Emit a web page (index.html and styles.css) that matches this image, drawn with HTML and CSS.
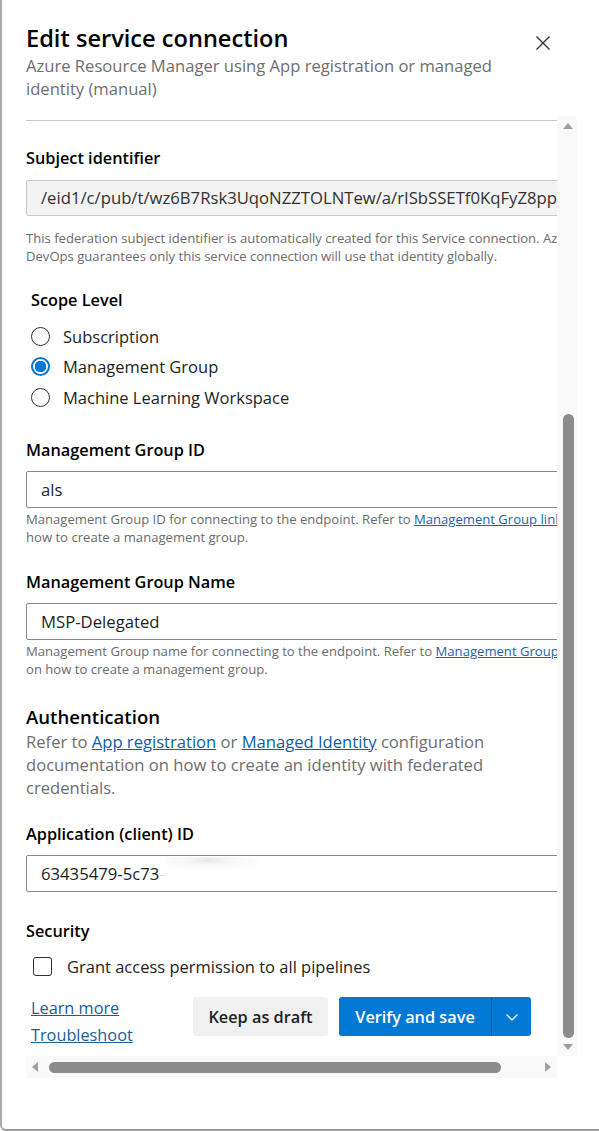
FILE: index.html
```html
<!DOCTYPE html>
<html lang="en">
<head>
<meta charset="utf-8">
<title>Edit service connection</title>
<link rel="stylesheet" href="styles.css">
</head>
<body>
<div class="panel">
  <header class="head">
    <div class="titles">
      <h1 class="title">Edit service connection</h1>
      <p class="sub">Azure Resource Manager using App registration or managed identity (manual)</p>
    </div>
    <button class="close" aria-label="Close">
      <svg width="16" height="16" viewBox="0 0 16 16"><path d="M1.5 1.5 L14.5 14.5 M14.5 1.5 L1.5 14.5" stroke="#323130" stroke-width="1.3" fill="none"/></svg>
    </button>
  </header>

  <div class="scroller">
    <div class="viewport">
      <div class="content">
        <div class="prev-input"></div>

        <div class="label first">Subject identifier</div>
        <div class="input disabled">/eid1/c/pub/t/wz6B7Rsk3UqoNZZTOLNTew/a/rISbSSETf0KqFyZ8ppFQ5bvQ/sc/7ad0</div>
        <div class="hint hint-a">
          <span class="ln">This federation subject identifier is automatically created for this Service connection. Azure</span>
          <span class="ln">DevOps guarantees only this service connection will use that identity globally.</span>
        </div>

        <div class="label scope">Scope Level</div>
        <div class="radios">
          <div class="radio-row"><span class="radio"></span><span class="rlabel">Subscription</span></div>
          <div class="radio-row"><span class="radio on"></span><span class="rlabel">Management Group</span></div>
          <div class="radio-row"><span class="radio"></span><span class="rlabel">Machine Learning Workspace</span></div>
        </div>

        <div class="label sec">Management Group ID</div>
        <div class="input">als</div>
        <div class="hint">
          <span class="ln">Management Group ID for connecting to the endpoint. Refer to <a href="#">Management Group link</a> on</span>
          <span class="ln">how to create a management group.</span>
        </div>

        <div class="label sec2">Management Group Name</div>
        <div class="input">MSP-Delegated</div>
        <div class="hint">
          <span class="ln">Management Group name for connecting to the endpoint. Refer to <a href="#">Management Group link</a></span>
          <span class="ln">on how to create a management group.</span>
        </div>

        <h2 class="auth">Authentication</h2>
        <p class="auth-text">
          <span class="ln">Refer to <a href="#">App registration</a> or <a href="#">Managed Identity</a> configuration</span>
          <span class="ln">documentation on how to create an identity with federated</span>
          <span class="ln">credentials.</span>
        </p>

        <div class="label app">Application (client) ID</div>
        <div class="input appid">63435479-5c73<span class="smudge">-</span><span class="blur"></span></div>

        <div class="label security">Security</div>
        <label class="check-row"><span class="checkbox"></span><span class="clabel">Grant access permission to all pipelines</span></label>

        <div class="footer">
          <div class="links">
            <a href="#">Learn more</a>
            <a href="#">Troubleshoot</a>
          </div>
          <div class="actions">
            <button class="btn draft">Keep as draft</button>
            <div class="split">
              <button class="btn primary">Verify and save</button>
              <button class="btn chevron" aria-label="More">
                <svg width="14" height="14" viewBox="0 0 14 14"><path d="M1.5 4.5 L7 10 L12.5 4.5" stroke="#fff" stroke-width="1.3" fill="none"/></svg>
              </button>
            </div>
          </div>
        </div>
      </div>
    </div>

    <div class="vbar">
      <span class="arrow up"></span>
      <div class="vtrack"><span class="vthumb"></span></div>
      <span class="arrow down"></span>
    </div>
    <div class="hbar">
      <span class="arrow left"></span>
      <div class="htrack"><span class="hthumb"></span></div>
      <span class="arrow right"></span>
    </div>
    <div class="corner"></div>
  </div>
</div>
</body>
</html>
```

FILE: styles.css
```css
* { box-sizing: border-box; }
html, body { margin: 0; padding: 0; background: #ffffff; }
body {
  font-family: "Open Sans", "Noto Sans", "Liberation Sans", sans-serif;
  color: #201f1e;
}

.panel {
  width: 599px;
  height: 1131px;
  border-left: 2px solid #ababab;
  border-bottom: 2px solid #9a9a9a;
  border-bottom-left-radius: 6px;
  background: #fff;
  overflow: hidden;
}

/* header */
.head {
  display: flex;
  justify-content: space-between;
  align-items: flex-start;
  padding: 22px 0 0 24px;
  height: 116px;
}
.titles { width: 492px; }
.title {
  margin: 0;
  font-size: 23.6px;
  font-weight: 600;
  line-height: 32px;
  color: #000;
}
.sub {
  margin: 0;
  font-size: 16.6px;
  line-height: 23px;
  color: #6e6e6e;
  font-weight: 400;
}
.close {
  border: 0;
  background: transparent;
  padding: 0;
  margin: 13px 48px 0 0;
  width: 16px;
  height: 16px;
  display: flex;
}

/* scroll area */
.scroller {
  margin-left: 24px;
  display: grid;
  grid-template-columns: 531px 20px;
  grid-template-rows: 940px 22px;
}
.viewport {
  overflow: hidden;
  position: relative;
}
.content {
  width: 760px;
}
.prev-input {
  height: 5px;
  width: 531px;
  border-bottom: 1px solid #c8c6c4;
}

.label {
  font-size: 16.3px;
  font-weight: 600;
  line-height: 22px;
  color: #000;
}
.label.first { margin-top: 26px; }
.label.scope { margin-top: 24px; padding-left: 5px; }
.label.sec { margin-top: 26px; }
.label.sec2 { margin-top: 25px; }
.label.app { margin-top: 24px; }
.label.security { margin-top: 28px; }

.input {
  margin-top: 10px;
  height: 37px;
  width: 740px;
  border: 1px solid #8a8886;
  border-radius: 2px;
  padding: 0 14px;
  font-size: 16.7px;
  line-height: 35px;
  color: #201f1e;
  white-space: nowrap;
  overflow: hidden;
  position: relative;
  background: #fff;
}
.input.disabled {
  margin-top: 11px;
  height: 36px;
  line-height: 34px;
  background: #f3f3f3;
  border-color: #c8c8c8;
  color: #323130;
}
.appid .smudge { color: #d8d8d8; }
.appid .blur {
  position: absolute;
  left: 138px;
  top: 1px;
  width: 215px;
  height: 33px;
  background: radial-gradient(ellipse at 20% 10%, #e4e4e4 0, #f6f6f6 8%, #ffffff 25%);
}

.hint {
  margin-top: 2px;
  font-size: 13.1px;
  line-height: 18px;
  color: #6b6b6b;
}
.hint.hint-a { margin-top: 13px; }
.ln { display: block; white-space: nowrap; }
a { color: #1a5d9a; text-decoration: underline; }
.hint a { color: #1c63a8; }

/* radios */
.radios {
  margin-top: 10px;
  padding-left: 5px;
  display: flex;
  flex-direction: column;
}
.radio-row {
  height: 30.5px;
  display: flex;
  align-items: center;
  gap: 13px;
}
.radio {
  width: 19px;
  height: 19px;
  border-radius: 50%;
  border: 1px solid #323130;
  background: #fff;
  flex: none;
}
.radio.on {
  border: 2px solid #0078d4;
  background: radial-gradient(circle, #0078d4 0, #0078d4 5.5px, #fff 6px);
}
.rlabel {
  font-size: 16.5px;
  color: #201f1e;
}

/* auth */
.auth {
  margin: 27px 0 0;
  font-size: 18.6px;
  font-weight: 600;
  line-height: 24px;
  color: #000;
}
.auth-text {
  margin: 1px 0 0;
  font-size: 16.6px;
  line-height: 23px;
  color: #6e6e6e;
}
.auth-text a { color: #0f5ea8; }

/* checkbox */
.check-row {
  margin-top: 10px;
  height: 30px;
  display: flex;
  align-items: center;
  padding-left: 7px;
  gap: 15px;
}
.checkbox {
  width: 19px;
  height: 19px;
  border: 1px solid #323130;
  border-radius: 3px;
  flex: none;
}
.clabel { font-size: 16.5px; color: #201f1e; }

/* footer */
.footer {
  width: 531px;
  margin-top: 13px;
  display: flex;
  align-items: flex-start;
  padding: 0 26px 0 5px;
}
.links {
  display: flex;
  flex-direction: column;
  font-size: 16.3px;
  line-height: 27px;
}
.links a { color: #1a5d9a; }
.actions {
  margin-left: auto;
  margin-top: 2.5px;
  display: flex;
  gap: 11px;
}
.btn {
  border: 0;
  height: 39px;
  border-radius: 3px;
  font-family: inherit;
  font-size: 16.3px;
  font-weight: 600;
  padding: 0;
  cursor: pointer;
}
.draft {
  width: 135px;
  background: #f0f0f0;
  color: #201f1e;
}
.split { display: flex; }
.primary {
  width: 152px;
  background: #0078d4;
  color: #fff;
  border-radius: 3px 0 0 3px;
}
.chevron {
  width: 40px;
  background: #0078d4;
  border-left: 1px solid #005a9e;
  border-radius: 0 3px 3px 0;
  display: flex;
  align-items: center;
  justify-content: center;
}

/* scrollbars */
.vbar {
  background: #f9f9f9;
  display: flex;
  flex-direction: column;
  align-items: center;
  padding: 7px 0 6px 2px;
}
.vtrack {
  flex: 1;
  width: 12px;
  display: flex;
  flex-direction: column;
  justify-content: flex-end;
  padding: 0 0 6px;
}
.vthumb {
  display: block;
  height: 624px;
  width: 11px;
  margin: 0 auto;
  border-radius: 6px;
  background: #8c8c8c;
}
.hbar {
  background: #f9f9f9;
  display: flex;
  align-items: center;
  padding: 0 6px 0 6px;
}
.htrack {
  flex: 1;
  padding: 0 5px 0 11px;
}
.hthumb {
  display: block;
  height: 11px;
  width: 452px;
  border-radius: 6px;
  background: #8c8c8c;
}
.corner { background: #fff; }

.arrow { width: 0; height: 0; display: block; flex: none; }
.arrow.up { border-left: 5px solid transparent; border-right: 5px solid transparent; border-bottom: 6px solid #a0a0a0; }
.arrow.down { border-left: 5px solid transparent; border-right: 5px solid transparent; border-top: 6px solid #a0a0a0; }
.arrow.left { border-top: 5px solid transparent; border-bottom: 5px solid transparent; border-right: 6px solid #a0a0a0; }
.arrow.right { border-top: 5px solid transparent; border-bottom: 5px solid transparent; border-left: 6px solid #a0a0a0; }
```
